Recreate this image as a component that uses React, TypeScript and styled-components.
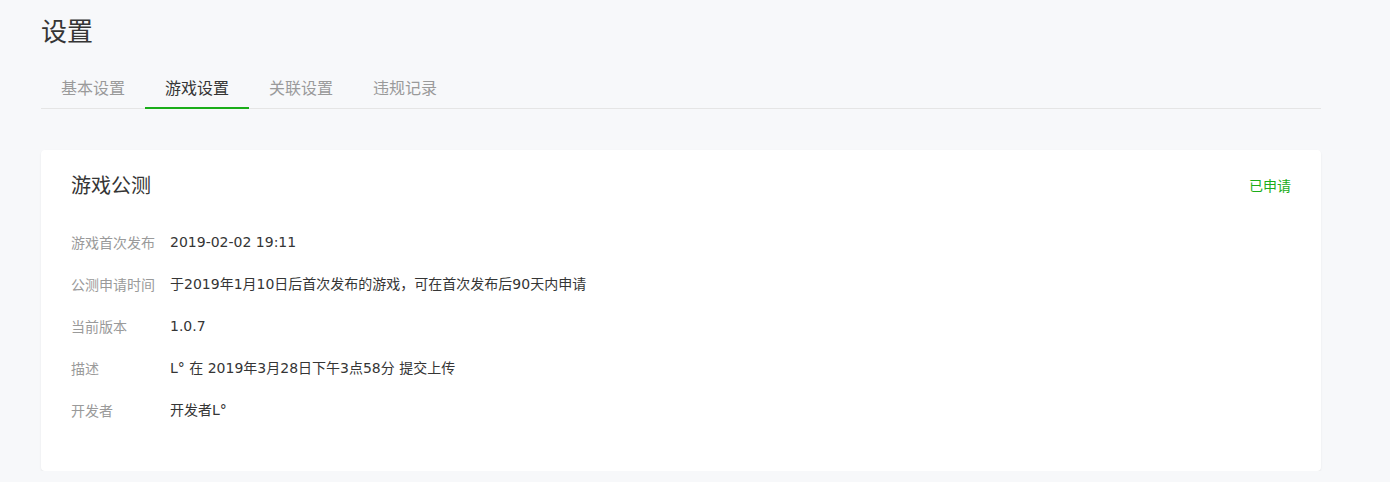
import React from "react";
import styled, { createGlobalStyle } from "styled-components";

const GlobalStyle = createGlobalStyle`
  html, body { margin: 0; padding: 0; background: #f7f8fa; }
  body {
    font-family: "Noto Sans CJK SC", sans-serif;
    color: #353535;
  }
`;

const Page = styled.div`
  width: 1280px;
  padding: 12px 0 0 41px;
`;

const PageTitle = styled.h1`
  margin: 0;
  font-size: 26px;
  font-weight: 400;
  line-height: 36px;
  color: #353535;
`;

const Tabs = styled.div`
  display: flex;
  margin-top: 19px;
  border-bottom: 1px solid #e5e5e5;
`;

const Tab = styled.div<{ $active?: boolean }>`
  padding: 0 20px;
  font-size: 16px;
  line-height: 40px;
  height: 40px;
  color: ${(p) => (p.$active ? "#353535" : "#9a9a9a")};
  border-bottom: 2px solid ${(p) => (p.$active ? "#1aad19" : "transparent")};
  margin-bottom: -1px;
`;

const Card = styled.section`
  margin-top: 41px;
  background: #fff;
  border-radius: 4px;
  box-shadow: 0 1px 2px rgba(0, 0, 0, 0.08);
  padding: 20px 30px 40px 30px;
`;

const CardHeader = styled.div`
  display: flex;
  justify-content: space-between;
  align-items: center;
  height: 30px;
  margin-bottom: 21px;
`;

const CardTitle = styled.h2`
  margin: 0;
  font-size: 20px;
  font-weight: 400;
  line-height: 30px;
  color: #353535;
`;

const Status = styled.span`
  font-size: 14px;
  color: #1aad19;
`;

const Row = styled.div`
  display: flex;
  align-items: center;
  padding: 10px 0;
  font-size: 14px;
  line-height: 22px;
`;

const Label = styled.div`
  width: 99px;
  flex-shrink: 0;
  color: #9a9a9a;
`;

const Value = styled.div`
  font-family: "DejaVu Sans", "Noto Sans CJK SC", sans-serif;
  color: #353535;
`;

const rows: [string, string][] = [
  ["游戏首次发布", "2019-02-02 19:11"],
  ["公测申请时间", "于2019年1月10日后首次发布的游戏，可在首次发布后90天内申请"],
  ["当前版本", "1.0.7"],
  ["描述", "L° 在 2019年3月28日下午3点58分 提交上传"],
  ["开发者", "开发者L°"],
];

export default function App() {
  return (
    <>
      <GlobalStyle />
      <Page>
        <PageTitle>设置</PageTitle>
        <Tabs>
          <Tab>基本设置</Tab>
          <Tab $active>游戏设置</Tab>
          <Tab>关联设置</Tab>
          <Tab>违规记录</Tab>
        </Tabs>
        <Card>
          <CardHeader>
            <CardTitle>游戏公测</CardTitle>
            <Status>已申请</Status>
          </CardHeader>
          {rows.map(([l, v]) => (
            <Row key={l}>
              <Label>{l}</Label>
              <Value>{v}</Value>
            </Row>
          ))}
        </Card>
      </Page>
    </>
  );
}
